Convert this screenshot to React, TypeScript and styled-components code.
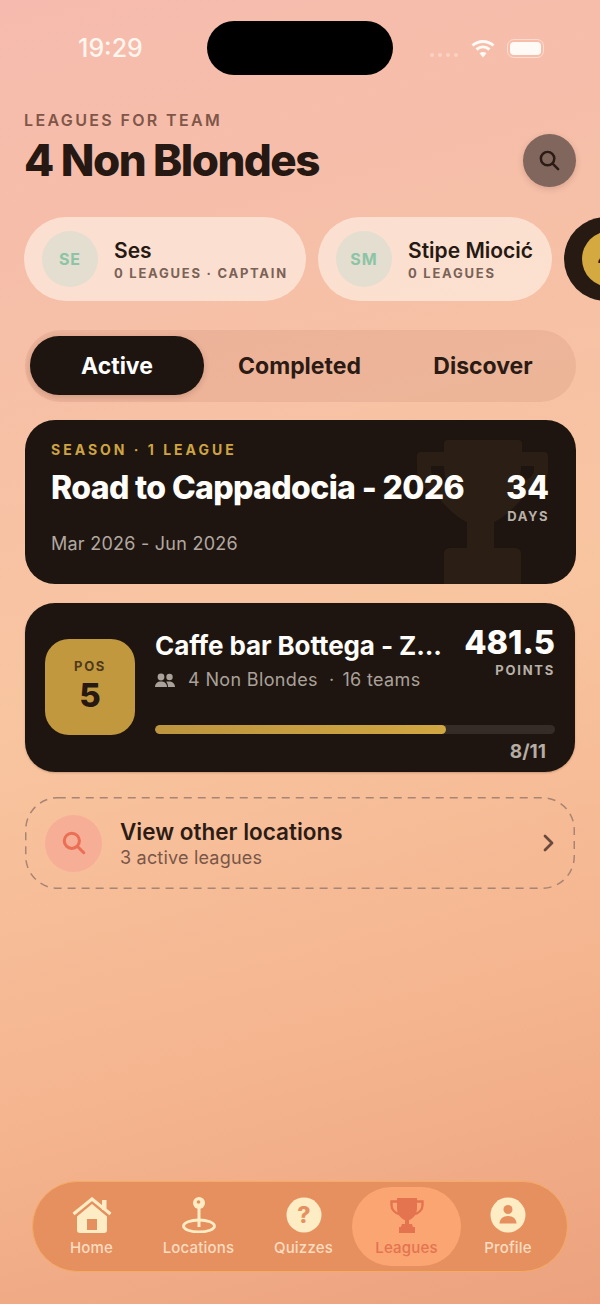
import React from 'react';
import styled, {createGlobalStyle} from 'styled-components';

const GlobalStyle = createGlobalStyle`
  html, body {
    margin: 0;
    padding: 0;
  }
  body {
    font-family: Inter, "Liberation Sans", sans-serif;
    -webkit-font-smoothing: antialiased;
  }
  * {
    box-sizing: border-box;
  }
`;

const Page = styled.div`
  width: 600px;
  height: 1304px;
  overflow: hidden;
  position: relative;
  display: flex;
  flex-direction: column;
  background: linear-gradient(165deg, #f6bbae 0%, #f6bfa8 22%, #f8c5a0 50%, #f4b48e 78%, #eca27e 100%);
`;

const StatusBar = styled.div`
  height: 96px;
  flex-shrink: 0;
  padding: 39px 56px 0 78px;
  display: flex;
  align-items: flex-start;
  justify-content: space-between;
  position: relative;
`;

const Time = styled.span`
  margin-top: -3px;
  font-size: 25px;
  line-height: 24px;
  font-weight: 500;
  color: #fff6ee;
`;

const Island = styled.div`
  position: absolute;
  left: 207px;
  top: 21px;
  width: 186px;
  height: 54px;
  border-radius: 27px;
  background: #000;
`;

const StatusIcons = styled.div`
  display: flex;
  align-items: flex-start;
  gap: 12px;
`;

const Dots = styled.div`
  display: flex;
  gap: 4px;
  margin-top: 14px;
  margin-right: 1px;
`;

const Dot = styled.i`
  width: 4px;
  height: 4px;
  border-radius: 50%;
  background: rgba(255, 236, 226, 0.45);
`;

const Battery = styled.div`
  width: 37px;
  height: 19px;
  padding: 2px;
  border-radius: 7px;
  border: 1px solid rgba(255, 240, 232, 0.6);
`;

const BatteryFill = styled.div`
  height: 100%;
  border-radius: 4px;
  background: #fffaf5;
`;

const Header = styled.header`
  padding: 0 24px;
  display: flex;
  align-items: flex-start;
  justify-content: space-between;
`;

const Eyebrow = styled.div`
  margin-top: 14px;
  font-size: 16px;
  line-height: 20px;
  font-weight: 600;
  letter-spacing: 2.35px;
  color: #7f5647;
`;

const Title = styled.h1`
  margin: 5px 0 0;
  font-size: 44px;
  line-height: 50px;
  font-weight: 800;
  letter-spacing: -1.55px;
  color: #261812;
`;

const RoundButton = styled.button`
  margin-top: 38px;
  width: 53px;
  height: 53px;
  padding: 0;
  border: none;
  border-radius: 50%;
  background: #80665c;
  box-shadow: 0 2px 6px rgba(80, 40, 25, 0.18);
  display: flex;
  align-items: center;
  justify-content: center;
`;

const Players = styled.div`
  margin-top: 30px;
  padding-left: 24px;
  display: flex;
  gap: 12px;
  flex-shrink: 0;
  width: 800px;
`;

const PlayerChip = styled.div<{$width: number; $dark?: boolean}>`
  width: ${(p) => p.$width}px;
  height: 84px;
  flex-shrink: 0;
  border-radius: 42px;
  background: ${(p) => (p.$dark ? '#261a12' : 'rgba(255, 246, 238, 0.58)')};
  padding: 0 18px;
  display: flex;
  align-items: center;
  gap: 16px;
`;

const Avatar = styled.div<{$gold?: boolean}>`
  width: 56px;
  height: 56px;
  flex-shrink: 0;
  border-radius: 50%;
  background: ${(p) => (p.$gold ? '#d4a93f' : '#e3ded0')};
  display: flex;
  align-items: center;
  justify-content: center;
  color: ${(p) => (p.$gold ? '#261812' : '#8cc4a6')};
  font-size: 16px;
  font-weight: 700;
  letter-spacing: 1px;
`;

const PlayerInfo = styled.div`
  padding-top: 2px;
`;

const PlayerName = styled.div`
  font-size: 21px;
  line-height: 24px;
  font-weight: 600;
  color: #261812;
  white-space: nowrap;
`;

const PlayerMeta = styled.div`
  margin-top: 2px;
  font-size: 13px;
  line-height: 16px;
  font-weight: 700;
  letter-spacing: 1.75px;
  color: #7a6257;
  white-space: nowrap;
`;

const Tabs = styled.div`
  margin: 29px 24px 0 25px;
  height: 72px;
  padding: 6px 5px 7px;
  border-radius: 36px;
  background: rgba(200, 130, 105, 0.2);
  display: grid;
  grid-template-columns: 174px 191px 1fr;
`;

const Tab = styled.div<{$active?: boolean}>`
  border-radius: 29px;
  display: flex;
  align-items: center;
  justify-content: center;
  font-size: 23px;
  font-weight: 700;
  color: ${(p) => (p.$active ? '#fff' : '#2b1b14')};
  background: ${(p) => (p.$active ? '#1e1510' : 'transparent')};
  box-shadow: ${(p) => (p.$active ? '0 2px 6px rgba(60, 30, 15, 0.18)' : 'none')};
`;

const SeasonCard = styled.section`
  margin: 18px 24px 0 25px;
  height: 164px;
  position: relative;
  overflow: hidden;
  border-radius: 30px;
  background: #1e1510;
  padding: 21px 27px 0 26px;
  display: flex;
  justify-content: space-between;
`;

const SeasonInfo = styled.div`
  position: relative;
`;

const SeasonLabel = styled.div`
  font-size: 14px;
  line-height: 18px;
  font-weight: 700;
  letter-spacing: 3px;
  color: #cfa442;
`;

const SeasonTitle = styled.div`
  margin-top: 9px;
  font-size: 32px;
  line-height: 40px;
  font-weight: 800;
  letter-spacing: -0.63px;
  color: #fffdfa;
  white-space: nowrap;
`;

const SeasonDates = styled.div`
  margin-top: 25px;
  font-size: 18px;
  line-height: 22px;
  letter-spacing: 0.25px;
  color: #b2a8a0;
`;

const Countdown = styled.div`
  position: relative;
  margin-top: 27px;
  text-align: right;
`;

const CountValue = styled.div`
  font-size: 32px;
  line-height: 40px;
  font-weight: 800;
  color: #fffdfa;
`;

const CountUnit = styled.div`
  font-size: 13px;
  line-height: 16px;
  font-weight: 700;
  letter-spacing: 1.55px;
  color: #b9b0a8;
`;

const TrophyWatermark = styled.svg`
  position: absolute;
  left: 392px;
  top: 20px;
  width: 131px;
  height: 150px;
  color: #2b1e15;
`;

const LeagueCard = styled.section`
  margin: 19px 25px 0;
  height: 169px;
  border-radius: 30px;
  background: #1e1510;
  box-shadow: 0 1px 2px rgba(70, 35, 15, 0.25);
  padding: 0 20px;
  display: flex;
  align-items: flex-start;
  gap: 20px;
`;

const PositionBadge = styled.div`
  margin-top: 36px;
  width: 90px;
  height: 96px;
  flex-shrink: 0;
  border-radius: 24px;
  background: #c2983f;
  display: flex;
  flex-direction: column;
  align-items: center;
  color: #261812;
  padding-top: 19px;
`;

const PositionLabel = styled.div`
  font-size: 13px;
  line-height: 16px;
  font-weight: 700;
  letter-spacing: 1.6px;
  color: #4f3a1c;
`;

const PositionValue = styled.div`
  margin-top: 3px;
  font-size: 33px;
  line-height: 36px;
  font-weight: 800;
`;

const LeagueBody = styled.div`
  flex: 1;
  min-width: 0;
`;

const LeagueTop = styled.div`
  display: flex;
  justify-content: space-between;
  height: 104px;
`;

const LeagueName = styled.div`
  margin-top: 27px;
  width: 292px;
  overflow: hidden;
  white-space: nowrap;
  font-size: 26px;
  line-height: 32px;
  font-weight: 700;
  letter-spacing: -0.1px;
  color: #fffdfa;
`;

const LeagueMeta = styled.div`
  margin-top: 7px;
  display: flex;
  align-items: center;
  font-size: 18px;
  line-height: 22px;
  letter-spacing: 0.35px;
  color: #aaa19a;
  white-space: nowrap;
`;

const MetaIcon = styled.svg`
  margin-right: 13px;
`;

const MetaDot = styled.span`
  margin: 0 8px 0 11px;
`;

const Score = styled.div`
  margin-top: 21px;
  text-align: right;
`;

const ScoreValue = styled.div`
  font-size: 32.5px;
  line-height: 38px;
  font-weight: 800;
  color: #fffdfa;
`;

const ScoreUnit = styled.div`
  font-size: 13px;
  line-height: 16px;
  font-weight: 700;
  letter-spacing: 1.75px;
  color: #b9b0a8;
`;

const ProgressTrack = styled.div`
  margin-top: 18px;
  height: 9px;
  border-radius: 5px;
  background: #352c28;
  overflow: hidden;
`;

const ProgressFill = styled.div`
  height: 100%;
  border-radius: 5px;
  background: linear-gradient(90deg, #bd953e, #d1a742);
`;

const ProgressText = styled.div`
  margin-top: 7px;
  padding-right: 9px;
  text-align: right;
  font-size: 19px;
  line-height: 22px;
  font-weight: 700;
  color: #b6aca4;
`;

const LinkCard = styled.section`
  margin: 25px 25px 0;
  height: 92px;
  position: relative;
  padding: 0 18px 0 20px;
  display: flex;
  align-items: center;
`;

const DashOutline = styled.svg`
  position: absolute;
  left: 0;
  top: 0;
`;

const LinkIcon = styled.div`
  width: 57px;
  height: 57px;
  border-radius: 50%;
  background: #f6ae97;
  display: flex;
  align-items: center;
  justify-content: center;
`;

const LinkText = styled.div`
  margin-left: 18px;
  flex: 1;
`;

const LinkTitle = styled.div`
  font-size: 22.5px;
  line-height: 28px;
  font-weight: 600;
  color: #2d1c16;
`;

const LinkSub = styled.div`
  margin-top: 1px;
  font-size: 18px;
  line-height: 22px;
  letter-spacing: 0.2px;
  color: #795648;
`;

const BottomNav = styled.nav`
  position: absolute;
  left: 32px;
  top: 1181px;
  width: 536px;
  height: 91px;
  border-radius: 46px;
  background: #e6905f;
  border: 1.5px solid #f4ab62;
  display: grid;
  grid-template-columns: 101px 113px 97px 109px 94px;
  padding: 5px 0 0 8px;
`;

const NavItem = styled.div<{$active?: boolean}>`
  height: 79px;
  border-radius: 40px;
  display: flex;
  flex-direction: column;
  align-items: center;
  padding-top: 10px;
  font-size: 15px;
  line-height: 18px;
  font-weight: 500;
  letter-spacing: 0.2px;
  color: ${(p) => (p.$active ? '#e4734f' : '#fbdcc0')};
  background: ${(p) => (p.$active ? '#fba573' : 'transparent')};
`;

const NavIcon = styled.svg`
  width: 42px;
  height: 36px;
  margin-bottom: 6px;
  flex-shrink: 0;
`;

const Search = ({size, color, weight}: {size: number; color: string; weight: number}) => (
    <svg width={size} height={size} viewBox="0 0 24 24" fill="none" stroke={color} strokeWidth={weight} strokeLinecap="round">
        <circle cx="10" cy="10" r="7"/>
        <path d="M15.5 15.5 21 21"/>
    </svg>
);

const App = () => {
    return (
        <Page>
            <GlobalStyle/>
            <StatusBar>
                <Time>19:29</Time>
                <Island/>
                <StatusIcons>
                    <Dots><Dot/><Dot/><Dot/><Dot/></Dots>
                    <svg width="24" height="19" viewBox="0 0 24 19" fill="none" stroke="#fffaf5" strokeWidth="3">
                        <path d="M1.5 6.5C7.5 1 16.5 1 22.5 6.5"/>
                        <path d="M5.5 10.5C9.5 7 14.5 7 18.5 10.5"/>
                        <path d="M12 18.5 8.5 14.2C10.5 12.6 13.5 12.6 15.5 14.2Z" fill="#fffaf5" stroke="none"/>
                    </svg>
                    <Battery><BatteryFill/></Battery>
                </StatusIcons>
            </StatusBar>

            <Header>
                <div>
                    <Eyebrow>LEAGUES FOR TEAM</Eyebrow>
                    <Title>4 Non Blondes</Title>
                </div>
                <RoundButton>
                    <Search size={23} color="#2b1b14" weight={2.6}/>
                </RoundButton>
            </Header>

            <Players>
                <PlayerChip $width={282}>
                    <Avatar>SE</Avatar>
                    <PlayerInfo>
                        <PlayerName>Ses</PlayerName>
                        <PlayerMeta>0 LEAGUES · CAPTAIN</PlayerMeta>
                    </PlayerInfo>
                </PlayerChip>
                <PlayerChip $width={234}>
                    <Avatar>SM</Avatar>
                    <PlayerInfo>
                        <PlayerName>Stipe Miocić</PlayerName>
                        <PlayerMeta>0 LEAGUES</PlayerMeta>
                    </PlayerInfo>
                </PlayerChip>
                <PlayerChip $width={200} $dark>
                    <Avatar $gold>4N</Avatar>
                </PlayerChip>
            </Players>

            <Tabs>
                <Tab $active>Active</Tab>
                <Tab>Completed</Tab>
                <Tab>Discover</Tab>
            </Tabs>

            <SeasonCard>
                <TrophyWatermark viewBox="0 0 131 150" fill="currentColor">
                    <path fillRule="evenodd" d="M27 4q0-4 4-4h70q4 0 4 4v8h22q4 0 4 4v14c0 14-12 22-24 26-10 12-20 22-30 26v26H50V82C40 78 30 68 20 56 12 52 0 44 0 30V16q0-4 4-4h23zM14 26v4c0 6 6 10 16 13-2-6-3-11-3-17zM117 26h-13c0 6-1 11-3 17 10-3 16-7 16-13z"/>
                    <path d="M33 108h65q6 0 6 6v36H27v-36q0-6 6-6z"/>
                </TrophyWatermark>
                <SeasonInfo>
                    <SeasonLabel>SEASON · 1 LEAGUE</SeasonLabel>
                    <SeasonTitle>Road to Cappadocia - 2026</SeasonTitle>
                    <SeasonDates>Mar 2026 - Jun 2026</SeasonDates>
                </SeasonInfo>
                <Countdown>
                    <CountValue>34</CountValue>
                    <CountUnit>DAYS</CountUnit>
                </Countdown>
            </SeasonCard>

            <LeagueCard>
                <PositionBadge>
                    <PositionLabel>POS</PositionLabel>
                    <PositionValue>5</PositionValue>
                </PositionBadge>
                <LeagueBody>
                    <LeagueTop>
                        <div>
                            <LeagueName>Caffe bar Bottega - Z...</LeagueName>
                            <LeagueMeta>
                                <MetaIcon width="20" height="15" viewBox="0 0 20 15" fill="#aaa19a">
                                    <circle cx="6" cy="4" r="3.4"/>
                                    <circle cx="14.5" cy="4" r="3.2"/>
                                    <path d="M0 14c0-3.5 2.5-5.500 6-5.500s6 2 6 5.500z"/>
                                    <path d="M13 14c0-2.200-.6-4-1.900-5.200.8-.3 1.700-.4 2.700-.4 3.500 0 6.200 2 6.200 5.600z"/>
                                </MetaIcon>
                                4 Non Blondes
                                <MetaDot>·</MetaDot>
                                16 teams
                            </LeagueMeta>
                        </div>
                        <Score>
                            <ScoreValue>481.5</ScoreValue>
                            <ScoreUnit>POINTS</ScoreUnit>
                        </Score>
                    </LeagueTop>
                    <ProgressTrack>
                        <ProgressFill style={{width: `${(8 / 11) * 100}%`}}/>
                    </ProgressTrack>
                    <ProgressText>8/11</ProgressText>
                </LeagueBody>
            </LeagueCard>

            <LinkCard>
                <DashOutline width="550" height="92" fill="none">
                    <rect x="0.75" y="0.75" width="548.5" height="90.5" rx="32" stroke="#a98472" strokeWidth="1.5" strokeDasharray="8 6"/>
                </DashOutline>
                <LinkIcon>
                    <Search size={26} color="#ea6f55" weight={2.8}/>
                </LinkIcon>
                <LinkText>
                    <LinkTitle>View other locations</LinkTitle>
                    <LinkSub>3 active leagues</LinkSub>
                </LinkText>
                <svg width="16" height="20" viewBox="0 0 16 20" fill="none" stroke="#6a4a3d" strokeWidth="2.8" strokeLinecap="round" strokeLinejoin="round">
                    <path d="M4 3l7 7-7 7"/>
                </svg>
            </LinkCard>

            <BottomNav>
                <NavItem>
                    <NavIcon viewBox="0 0 42 36" fill="#fdecc4">
                        <path d="M31 3h4.500v10H31z"/>
                        <path d="M2.500 17 21 2l18.500 15" fill="none" stroke="#fdecc4" strokeWidth="3.200"/>
                        <path fillRule="evenodd" d="M21 7 6 19.500V33a3 3 0 0 0 3 3h24a3 3 0 0 0 3-3V19.500zM16 22h10v11H16z"/>
                    </NavIcon>
                    Home
                </NavItem>
                <NavItem>
                    <NavIcon viewBox="0 0 42 36" fill="none">
                        <path d="M21 6v24" stroke="#fdecc4" strokeWidth="3"/>
                        <ellipse cx="21" cy="29" rx="15.500" ry="6" stroke="#fdecc4" strokeWidth="2.800"/>
                        <circle cx="21" cy="6" r="6" fill="#fdecc4"/>
                        <circle cx="20.500" cy="5" r="1.800" fill="#e6905f"/>
                    </NavIcon>
                    Locations
                </NavItem>
                <NavItem>
                    <NavIcon viewBox="0 0 42 36">
                        <circle cx="21" cy="18" r="17.500" fill="#fdecc4"/>
                        <text x="21" y="26" textAnchor="middle" fontSize="23" fontWeight="800" fill="#e6905f" fontFamily="Inter, sans-serif">?</text>
                    </NavIcon>
                    Quizzes
                </NavItem>
                <NavItem $active>
                    <NavIcon viewBox="0 0 42 36" fill="#e4734f">
                        <path d="M11 1h20v10c0 6-4 11-8 12v5h-4v-5c-4-1-8-6-8-12z"/>
                        <path d="M11 4.500H5.500V8c0 5 4 8 7.500 9M31 4.500h5.500V8c0 5-4 8-7.500 9" fill="none" stroke="#e4734f" strokeWidth="2.400"/>
                        <path d="M16 27h10l1 3H15z"/>
                        <path d="M13 30h16v6H13z"/>
                    </NavIcon>
                    Leagues
                </NavItem>
                <NavItem>
                    <NavIcon viewBox="0 0 42 36">
                        <circle cx="21" cy="18" r="17.500" fill="#fdecc4"/>
                        <circle cx="21" cy="12.500" r="4.500" fill="#e6905f"/>
                        <path d="M12.500 26.500c0-4.500 3.500-7.500 8.500-7.500s8.500 3 8.500 7.500z" fill="#e6905f"/>
                    </NavIcon>
                    Profile
                </NavItem>
            </BottomNav>
        </Page>
    );
};

export default App;
